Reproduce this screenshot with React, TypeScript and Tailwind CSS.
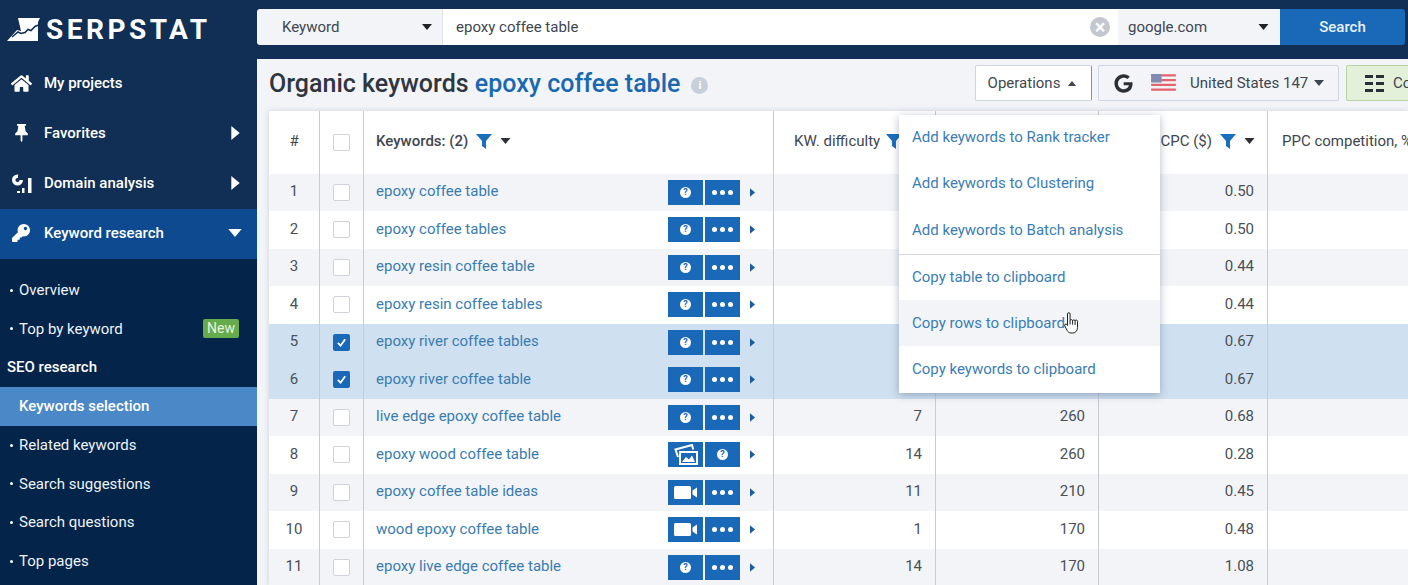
import { FC, ReactNode } from "react";
import { FaHome, FaKey, FaGoogle } from "react-icons/fa";

type SubItem = { label: string; badge?: string };

const topMenu = ["Overview", "Top by keyword"];
const seoMenu = ["Related keywords", "Search suggestions", "Search questions", "Top pages"];

// first six rows have their two middle values covered by the open Operations menu
const rows = [
  { n: 1, kw: "epoxy coffee table", cpc: "0.50" },
  { n: 2, kw: "epoxy coffee tables", cpc: "0.50" },
  { n: 3, kw: "epoxy resin coffee table", cpc: "0.44" },
  { n: 4, kw: "epoxy resin coffee tables", cpc: "0.44" },
  { n: 5, kw: "epoxy river coffee tables", cpc: "0.67", checked: true },
  { n: 6, kw: "epoxy river coffee table", cpc: "0.67", checked: true },
  { n: 7, kw: "live edge epoxy coffee table", d: 7, v: "260", cpc: "0.68" },
  { n: 8, kw: "epoxy wood coffee table", d: 14, v: "260", cpc: "0.28", kind: "images" },
  { n: 9, kw: "epoxy coffee table ideas", d: 11, v: "210", cpc: "0.45", kind: "video" },
  { n: 10, kw: "wood epoxy coffee table", d: 1, v: "170", cpc: "0.48", kind: "video" },
  { n: 11, kw: "epoxy live edge coffee table", d: 14, v: "170", cpc: "1.08" },
];

const Caret: FC<{ className?: string }> = ({ className }) => (
  <svg viewBox="0 0 10 6" className={className} fill="currentColor">
    <path d="M0 0h10L5 6z" />
  </svg>
);

const CaretRight: FC<{ className?: string }> = ({ className }) => (
  <svg viewBox="0 0 6 10" className={className} fill="currentColor">
    <path d="M0 0l6 5-6 5z" />
  </svg>
);

const Funnel = () => (
  <svg viewBox="0 0 16 16" className="h-4 w-4 text-[#1a6fbd]" fill="currentColor">
    <path d="M0 1h16L10 8v8L6 13V8z" />
  </svg>
);

const Logo = () => (
  <svg viewBox="0 0 33 23" className="h-[23px] w-[33px]" fill="white">
    <path d="M11 0H33L31 4V23H0L10 12l4 1z" />
    <path d="M5 19l6-5 3 1.500 4-1 3-3 3 1 4-4 5-2" fill="none" stroke="#112f54" strokeWidth="1.6" />
  </svg>
);

const PinIcon = () => (
  <svg viewBox="0 0 16 20" className="h-[18px] w-[15px]" fill="white">
    <path d="M3 0h10v2h-1.500l1 6 2.500 2.500v2H9v6l-1 1.500-1-1.500v-6H1v-2L3.500 8l1-6H3z" />
  </svg>
);

const DomainIcon = () => (
  <svg viewBox="0 0 20 19" className="h-[19px] w-[20px]" fill="white">
    <circle cx="5.500" cy="6" r="3.800" fill="none" stroke="white" strokeWidth="3.400" strokeDasharray="18 6" />
    <rect x="5" y="17" width="3" height="2" />
    <rect x="10" y="14" width="2.500" height="5" />
    <rect x="16" y="4" width="3.500" height="15" />
  </svg>
);

const ImagesIcon = () => (
  <svg viewBox="0 0 24 21" className="h-[21px] w-[24px]" fill="none" stroke="white" strokeWidth="2">
    <path d="M4 13L1.500 5.500 18 1l1.300 4.500" />
    <rect x="6" y="8" width="17" height="12" fill="#1a69b8" />
    <path d="M8 18l4-5 3 2.500 3-4 3 6.500z" fill="white" stroke="none" />
  </svg>
);

const VideoIcon = () => (
  <svg viewBox="0 0 24 13" className="h-[13px] w-[24px]" fill="white">
    <rect width="17" height="13" rx="1.500" />
    <path d="M18.500 4.500L23 1.500v10l-4.500-3z" />
  </svg>
);

const HandCursor: FC<{ className?: string }> = ({ className }) => (
  <svg viewBox="0 0 15 22" className={className} fill="white" stroke="#222" strokeWidth="1" strokeLinejoin="round">
    <path d="M3.500 2a1.300 1.300 0 0 1 2.600 0v6.500a1.300 1.300 0 0 1 2.500.2 1.300 1.300 0 0 1 2.500.3 1.200 1.200 0 0 1 2.400.5v6c0 3-2 5.500-4.600 5.500H7c-1.800 0-3-1-3.800-2.500L.8 14c-.8-1.500 1-2.500 2-1.500l.7 1z" />
    <path d="M6.100 8.500v4M8.600 8.700v4M11.100 9v4" fill="none" />
  </svg>
);

const Question = () => (
  <span className="flex h-[11px] w-[11px] items-center justify-center rounded-full bg-white text-[9px] font-bold leading-none text-[#1a69b8]">
    ?
  </span>
);

const Dots = () => (
  <span className="flex gap-[3px]">
    <i className="h-[5px] w-[5px] rounded-full bg-white" />
    <i className="h-[5px] w-[5px] rounded-full bg-white" />
    <i className="h-[5px] w-[5px] rounded-full bg-white" />
  </span>
);

const ActionBtn: FC<{ children: ReactNode }> = ({ children }) => (
  <span className="flex h-[25px] w-[35px] items-center justify-center bg-[#1a69b8]">{children}</span>
);

const MainItem: FC<{ icon: ReactNode; label: string; arrow?: boolean }> = ({ icon, label, arrow }) => (
  <div className="flex h-[50px] items-center pb-[2px] font-medium text-white">
    <span className="flex w-[44px] justify-center pr-[1px]">{icon}</span>
    <span className="flex-1">{label}</span>
    {arrow && <CaretRight className="mr-[17px] h-[14px] w-[9px]" />}
  </div>
);

const SubLink: FC<{ item: SubItem }> = ({ item }) => (
  <div className="flex h-[38.6px] items-center pl-[10px] pr-[18px] text-[#eef3f8]">
    <i className="mr-[6px] h-[3px] w-[3px] rounded-full bg-white" />
    <span className="flex-1">{item.label}</span>
    {item.badge && (
      <span className="rounded-[2px] bg-[#67ab4f] px-[4px] py-[1px] text-[14px] leading-[17px] text-[#e6f5dd]">
        {item.badge}
      </span>
    )}
  </div>
);

const Sidebar = () => (
  <aside className="flex w-[257px] shrink-0 flex-col bg-[#04244a]">
    <div className="bg-[#112f54]">
      <MainItem icon={<FaHome className="h-[21px] w-[21px]" />} label="My projects" />
      <MainItem icon={<PinIcon />} label="Favorites" arrow />
      <MainItem icon={<DomainIcon />} label="Domain analysis" arrow />
    </div>
    <div className="flex h-[50px] items-center bg-[#0d4a8f] pb-[2px] font-medium text-white">
      <span className="flex w-[42px] justify-center">
        <FaKey className="h-[18px] w-[18px]" />
      </span>
      <span className="ml-[2px] flex-1">Keyword research</span>
      <Caret className="mr-[15px] h-[8px] w-[14px]" />
    </div>
    <div className="pt-[12px]">
      {topMenu.map((label) => (
        <SubLink key={label} item={label === "Top by keyword" ? { label, badge: "New" } : { label }} />
      ))}
      <div className="flex h-[38.8px] items-center pl-[7px] font-medium text-white">SEO research</div>
      <div className="flex h-[39px] items-center bg-[#4a88c7] pl-[19px] font-medium text-white">
        Keywords selection
      </div>
      {seoMenu.map((label) => (
        <SubLink key={label} item={{ label }} />
      ))}
    </div>
  </aside>
);

const SearchBar = () => (
  <header className="flex h-[59px] shrink-0 bg-[#112f54]">
    <div className="flex w-[257px] shrink-0 items-center gap-[6px] pl-[7px]">
      <Logo />
      <span className="text-[28px] font-bold leading-none tracking-[3.5px] text-white">SERPSTAT</span>
    </div>
    <div className="mr-[3px] mt-[9px] flex h-[36px] flex-1 text-[#3e4650]">
      <div className="flex w-[186px] items-center justify-between rounded-l-[3px] border-r border-[#e0e4ea] bg-[#f2f4f8] pl-[25px] pr-[9px]">
        Keyword
        <Caret className="h-[6px] w-[12px] text-[#222]" />
      </div>
      <div className="flex flex-1 items-center justify-between bg-white pl-[13px] pr-[8px]">
        epoxy coffee table
        <span className="flex h-5 w-5 items-center justify-center rounded-full bg-[#c3c8d0] text-[20px] font-bold leading-none text-white">
          ×
        </span>
      </div>
      <div className="flex w-[162px] items-center justify-between bg-[#f2f4f8] pl-[10px] pr-[11px]">
        google.com
        <Caret className="h-[6px] w-[11px] text-[#222]" />
      </div>
      <div className="flex w-[125px] items-center justify-center rounded-r-[3px] bg-[#1a69b8] font-medium text-[#e8f1fa]">
        Search
      </div>
    </div>
  </header>
);

const Flag = () => (
  <svg viewBox="0 0 26 20" className="h-[19px] w-[27px]">
    <rect width="26" height="20" fill="#f4f4f6" />
    <path d="M0 1.500h26M0 6.500h26M0 11.500h26M0 16.500h26" stroke="#e2626e" strokeWidth="2.500" />
    <rect width="11" height="9" fill="#7f8bb0" />
  </svg>
);

const Toolbar = () => (
  <div className="flex h-[52px] shrink-0 items-start justify-between pl-[12px] pt-[6px]">
    <h1 className="mt-[1px] whitespace-nowrap text-[25px] font-medium leading-[36px] text-[#2f3640]">
      Organic keywords <span className="text-[#1a69b0]">epoxy coffee table</span>
      <span className="ml-[11px] inline-flex h-[17px] w-[17px] items-center justify-center rounded-full bg-[#c6cfda] align-[3px] text-[11px] font-bold leading-none text-white">
        i
      </span>
    </h1>
    <div className="flex w-[433px] shrink-0 gap-[6px] overflow-hidden text-[#3e4650]">
      <div className="flex h-[36px] w-[117px] shrink-0 items-center justify-center gap-[7px] rounded-[2px] border border-[#ccd6e4] border-r-[#6f95c0] bg-white pr-[2px]">
        Operations
        <Caret className="h-[5px] w-[10px] rotate-180" />
      </div>
      <div className="flex h-[36px] w-[241px] shrink-0 items-center rounded-[2px] border border-[#ccd6e4] bg-[#f2f4f8] pl-[15px]">
        <FaGoogle className="h-[19px] w-[19px] text-[#2b2f36]" />
        <span className="ml-[17px] flex"><Flag /></span>
        <span className="ml-[13px]">United States 147</span>
        <Caret className="ml-[6px] h-[6px] w-[10px]" />
      </div>
      <div className="ml-[1px] flex h-[36px] w-[120px] shrink-0 items-center rounded-[2px] border border-[#b5d3a5] bg-[#e3f1da] pl-[18px]">
        <span className="grid grid-cols-2 gap-x-[3px] gap-y-[4px]">
          {[0, 1, 2, 3, 4, 5].map((i) => (
            <i key={i} className="h-[3px] w-[8px] bg-[#2b2f36]" />
          ))}
        </span>
        <span className="ml-[9px]">Columns</span>
      </div>
    </div>
  </div>
);

const Check: FC<{ checked?: boolean }> = ({ checked }) =>
  checked ? (
    <span className="mt-[2px] flex h-[17px] w-[17px] items-center justify-center rounded-[2px] bg-[#1a69b8]">
      <svg viewBox="0 0 12 12" className="h-[11px] w-[11px]" fill="none" stroke="white" strokeWidth="2">
        <path d="M2 6.500l3 3 5-7" />
      </svg>
    </span>
  ) : (
    <span className="mt-[2px] h-[17px] w-[17px] rounded-[2px] border border-[#cfd3d9] bg-white" />
  );

const cols = "grid grid-cols-[51px_44px_410px_162px_163px_169px_1fr]";
const cell = "flex items-center border-r border-[#c6ccd4] pb-[2px]";

const Table = () => (
  <div className="ml-[12px] flex-1 bg-white shadow-[0_0_6px_rgba(60,80,110,0.2)]">
    <div className={`${cols} h-[62.5px] text-[#3e4650]`}>
      <div className={`${cell} justify-center`}>#</div>
      <div className={`${cell} justify-center`}><Check /></div>
      <div className={`${cell} gap-[8px] pl-[12px]`}>
        <span className="font-medium">Keywords: (2)</span>
        <Funnel />
        <Caret className="h-[6px] w-[11px] text-[#2b2f36]" />
      </div>
      <div className={`${cell} gap-[6px] pl-[20px]`}>KW. difficulty <Funnel /></div>
      <div className={cell} />
      <div className={`${cell} justify-end gap-[8px] pr-[12px]`}>
        CPC ($) <Funnel />
        <Caret className="h-[6px] w-[11px] text-[#2b2f36]" />
      </div>
      <div className="flex items-center whitespace-nowrap pb-[2px] pl-[14px]">PPC competition, %</div>
    </div>
    {rows.map((r) => (
      <div
        key={r.n}
        className={`${cols} h-[37.5px] text-[#4a5058] ${
          r.checked ? "bg-[#cfe0f0]" : r.n % 2 ? "bg-[#f2f4f8]" : "bg-white"
        }`}
      >
        <div className={`${cell} justify-center`}>{r.n}</div>
        <div className={`${cell} justify-center`}><Check checked={r.checked} /></div>
        <div className={`${cell} justify-between pl-[12px] pr-[18px]`}>
          <span className="text-[#3a7cb0]">{r.kw}</span>
          <span className="mt-[2px] flex items-center gap-[2px]">
            <ActionBtn>
              {r.kind === "images" ? <ImagesIcon /> : r.kind === "video" ? <VideoIcon /> : <Question />}
            </ActionBtn>
            <ActionBtn>{r.kind === "images" ? <Question /> : <Dots />}</ActionBtn>
            <CaretRight className="ml-[8px] h-[9px] w-[5px] text-[#1a5c9e]" />
          </span>
        </div>
        <div className={`${cell} justify-end pr-[13px]`}>{r.d}</div>
        <div className={`${cell} justify-end pr-[13px]`}>{r.v}</div>
        <div className={`${cell} justify-end pr-[13px]`}>{r.cpc}</div>
        <div />
      </div>
    ))}
  </div>
);

const Dropdown = () => (
  <div className="absolute left-[642px] top-[56px] w-[261px] bg-white text-[#3b7db5] shadow-[0_2px_8px_rgba(40,60,100,0.35)]">
    <div className="flex h-[44px] items-center pl-[13px]">Add keywords to Rank tracker</div>
    <div className="flex h-[48px] items-center pl-[13px]">Add keywords to Clustering</div>
    <div className="flex h-[47px] items-center pl-[13px]">Add keywords to Batch analysis</div>
    <div className="flex h-[46px] items-center border-t border-[#d5d9df] pl-[13px]">Copy table to clipboard</div>
    <div className="flex h-[46px] items-center bg-[#f2f4f8] pl-[13px]">Copy rows to clipboard</div>
    <div className="flex h-[47px] items-center pl-[13px]">Copy keywords to clipboard</div>
  </div>
);

export default function App() {
  return (
    <div className="flex h-[585px] w-[1408px] flex-col overflow-hidden bg-white font-['Roboto',sans-serif] text-[15px]">
      <SearchBar />
      <div className="flex min-h-0 flex-1">
        <Sidebar />
        <main className="relative flex min-w-0 flex-1 flex-col overflow-hidden bg-[#f2f4f8]">
          <Toolbar />
          <Table />
          <Dropdown />
          <HandCursor className="absolute left-[807px] top-[253px] h-[22px] w-[15px]" />
        </main>
      </div>
    </div>
  );
}
